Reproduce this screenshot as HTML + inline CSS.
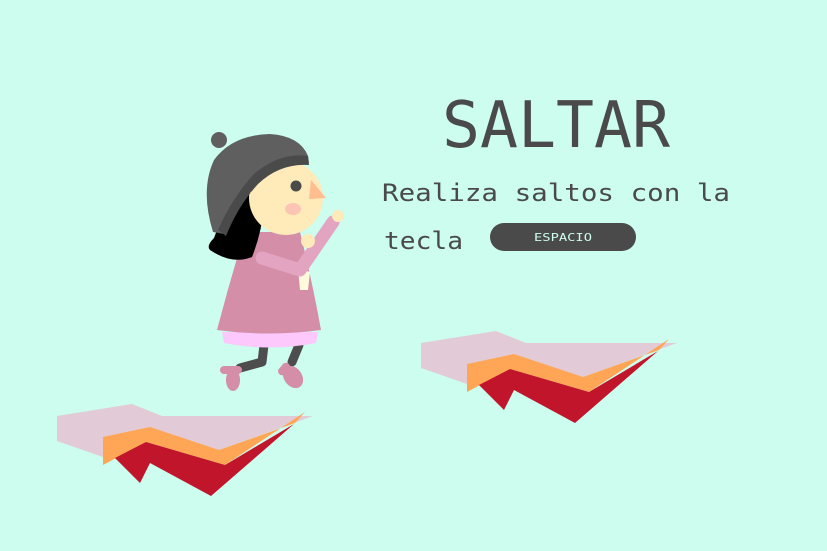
<!DOCTYPE html>
<html><head><meta charset="utf-8"><style>
html,body{margin:0;padding:0;background:#ccfdee;width:827px;height:551px;overflow:hidden}
svg{display:block}
text{font-family:"DejaVu Sans Mono","Liberation Mono",monospace;fill:#4a4a4a}
</style></head><body>
<svg width="827" height="551" viewBox="0 0 827 551">
<rect width="827" height="551" fill="#ccfdee"/>
<defs>
<g id="plat">
<polygon points="57,416 132,404 162,416 313,416 219,450 103,457 57,441" fill="#e2cbd6"/>
<polygon points="103,437 150,427 219,450 295,423 305,412 225,465 146,442 103,465" fill="#ffa656"/>
<polygon points="115,458 146,442 225,465 294,424 211,496 150,463 140,483" fill="#c1152b"/>
</g>
</defs>
<use href="#plat"/>
<use href="#plat" transform="translate(364,-73)"/>
<!-- legs -->
<path d="M264,345 L262,362 L240,368" stroke="#4d4d4d" stroke-width="9" fill="none" stroke-linecap="round" stroke-linejoin="round"/>
<path d="M299,345 L292,362" stroke="#4d4d4d" stroke-width="9" fill="none" stroke-linecap="round"/>
<ellipse cx="233" cy="380" rx="7" ry="11" fill="#d48ea8"/>
<rect x="220" y="366" width="22" height="8" rx="4" fill="#d48ea8"/>
<ellipse cx="293" cy="377" rx="9" ry="12" transform="rotate(-35 293 377)" fill="#d48ea8"/>
<rect x="280" y="362" width="8" height="14" rx="4" transform="rotate(40 284 369)" fill="#d48ea8"/>
<!-- skirt -->
<path d="M222,332 L318,332 L316,343 Q270,352 224,343 Z" fill="#fdc8fb"/>
<!-- dress -->
<path d="M245,232 L300,232 Q312,280 321,330 Q270,337 217,330 Q230,280 245,232 Z" fill="#d48ea8"/>
<path d="M298,268 L310,272 L308,290 L300,290 Z" fill="#fffadb"/>
<!-- hair -->
<path d="M258,185 Q222,212 214,238 Q206,246 210,250 Q232,265 252,257 Q262,232 264,205 Z" fill="#000"/>
<!-- face -->
<circle cx="286" cy="198" r="37" fill="#ffeaba"/>
<!-- hat -->
<path d="M213,232 Q200,190 214,160 Q232,135 270,134 Q300,136 308,156 L309,163 Q278,160 258,180 Q236,204 224,234 Z" fill="#5f5f60"/>
<path d="M308,156 Q280,152 254,174 Q232,198 218,230 L226,236 Q238,206 258,184 Q280,163 309,165 Z" fill="#4a4a4b"/>
<circle cx="219" cy="140" r="8" fill="#5f5f60"/>
<path d="M250,192 L262,190 L264,202 Z" fill="#ffeaba"/>
<circle cx="296" cy="186" r="5.5" fill="#4a4a4a"/>
<polygon points="311,180 326,198 309,199" fill="#ffbd90"/>
<ellipse cx="293" cy="209" rx="8" ry="6" fill="#fcc4b4"/>
<!-- arm -->
<path d="M262,258 L300,270 L333,222" stroke="#e3a4c2" stroke-width="13" fill="none" stroke-linecap="round" stroke-linejoin="round"/>
<circle cx="308" cy="241" r="7" fill="#ffeaba"/>
<circle cx="338" cy="216" r="6" fill="#ffeaba"/>
<!-- text -->
<text x="442" y="147" font-size="64" textLength="228" lengthAdjust="spacingAndGlyphs">SALTAR</text>
<text x="382" y="201" font-size="24" textLength="348" lengthAdjust="spacingAndGlyphs">Realiza saltos con la</text>
<text x="384" y="249" font-size="24" textLength="79" lengthAdjust="spacingAndGlyphs">tecla</text>
<rect x="490" y="223" width="146" height="28" rx="14" fill="#4a4a4a"/>
<text x="534" y="241" font-size="11" style="fill:#ccfdee" textLength="58" lengthAdjust="spacingAndGlyphs">ESPACIO</text>
</svg>
</body></html>
